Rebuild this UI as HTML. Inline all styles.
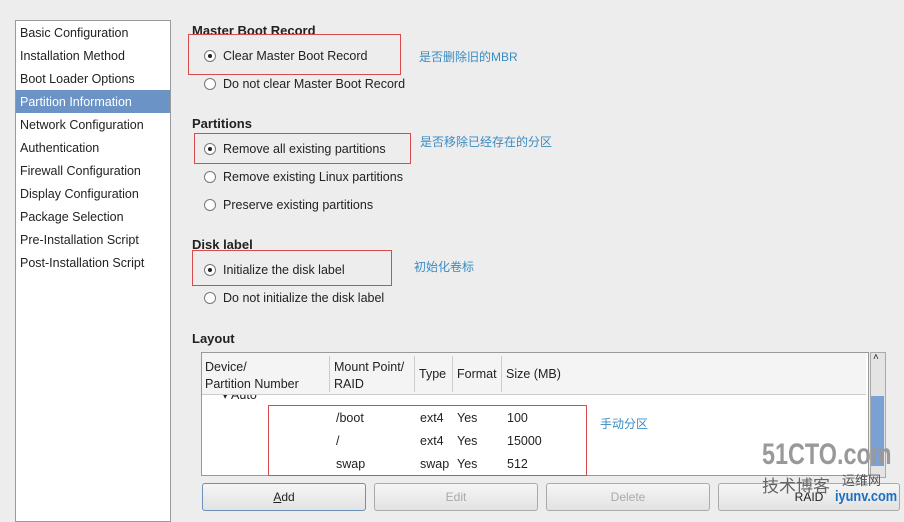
<!DOCTYPE html>
<html><head><style>
body{margin:0;width:904px;height:512px;background:#ededed;font-family:"Liberation Sans","Noto Sans CJK SC",sans-serif;font-size:12.5px;color:#222;position:relative;overflow:hidden}
.a{position:absolute;white-space:nowrap}
#nav{position:absolute;left:15px;top:20px;width:154px;height:500px;background:#fff;border:1px solid #9a9a9a}
#nav div{height:23px;line-height:23px;padding-left:4px;padding-top:1px;box-sizing:border-box}
#nav .sel{background:#6b93c6;color:#fff}
.h{font-weight:bold;font-size:13px}
.r{width:10px;height:10px;border:1px solid #777;border-radius:50%;background:#fff;position:absolute}
.r.on::after{content:"";position:absolute;left:3px;top:3px;width:4px;height:4px;border-radius:50%;background:#222}
.box{position:absolute;border:1px solid #d94a4a}
.cn{color:#3a8cc2;font-size:12px}
.btn{position:absolute;top:483px;height:26px;border:1px solid #aaa;border-radius:3px;background:linear-gradient(#f6f6f6,#e2e2e2);text-align:center;line-height:26px;color:#aaa;font-size:12px}
</style></head><body>
<div id="nav">
<div>Basic Configuration</div><div>Installation Method</div><div>Boot Loader Options</div><div class="sel">Partition Information</div><div>Network Configuration</div><div>Authentication</div><div>Firewall Configuration</div><div>Display Configuration</div><div>Package Selection</div><div>Pre-Installation Script</div><div>Post-Installation Script</div>
</div>
<div class="a h" style="left:192px;top:23px">Master Boot Record</div>
<div class="box" style="left:188px;top:34px;width:211px;height:39px"></div>
<div class="r on" style="left:204px;top:50px"></div><div class="a" style="left:223px;top:49px">Clear Master Boot Record</div>
<div class="r" style="left:204px;top:78px"></div><div class="a" style="left:223px;top:77px">Do not clear Master Boot Record</div>
<div class="a cn" style="left:419px;top:48px">是否删除旧的MBR</div>
<div class="a h" style="left:192px;top:116px">Partitions</div>
<div class="box" style="left:194px;top:133px;width:215px;height:29px"></div>
<div class="r on" style="left:204px;top:143px"></div><div class="a" style="left:223px;top:142px">Remove all existing partitions</div>
<div class="r" style="left:204px;top:171px"></div><div class="a" style="left:223px;top:170px">Remove existing Linux partitions</div>
<div class="r" style="left:204px;top:199px"></div><div class="a" style="left:223px;top:198px">Preserve existing partitions</div>
<div class="a cn" style="left:420px;top:133px">是否移除已经存在的分区</div>
<div class="a h" style="left:192px;top:237px">Disk label</div>
<div class="box" style="left:192px;top:250px;width:198px;height:34px"></div>
<div class="r on" style="left:204px;top:264px"></div><div class="a" style="left:223px;top:263px">Initialize the disk label</div>
<div class="r" style="left:204px;top:292px"></div><div class="a" style="left:223px;top:291px">Do not initialize the disk label</div>
<div class="a cn" style="left:414px;top:258px">初始化卷标</div>
<div class="a h" style="left:192px;top:331px">Layout</div>
<div style="position:absolute;left:201px;top:352px;width:666px;height:122px;background:#fff;border:1px solid #999;overflow:hidden">
<div class="a" style="left:20px;top:34px">▾ Auto</div>
</div>
<div style="position:absolute;left:202px;top:353px;width:664px;height:41px;background:#f4f4f4;border-bottom:1px solid #ccc"></div>
<div class="a" style="left:205px;top:359px;line-height:17px">Device/<br>Partition Number</div>
<div class="a" style="left:334px;top:359px;line-height:17px">Mount Point/<br>RAID</div>
<div class="a" style="left:419px;top:367px">Type</div>
<div class="a" style="left:457px;top:367px">Format</div>
<div class="a" style="left:506px;top:367px">Size (MB)</div>
<div style="position:absolute;left:329px;top:356px;width:1px;height:36px;background:#ccc"></div>
<div style="position:absolute;left:414px;top:356px;width:1px;height:36px;background:#ccc"></div>
<div style="position:absolute;left:452px;top:356px;width:1px;height:36px;background:#ccc"></div>
<div style="position:absolute;left:501px;top:356px;width:1px;height:36px;background:#ccc"></div>
<div class="box" style="left:268px;top:405px;width:317px;height:69px;background:#fff"></div>
<div class="a" style="left:336px;top:411px">/boot</div><div class="a" style="left:420px;top:411px">ext4</div><div class="a" style="left:457px;top:411px">Yes</div><div class="a" style="left:507px;top:411px">100</div>
<div class="a" style="left:336px;top:434px">/</div><div class="a" style="left:420px;top:434px">ext4</div><div class="a" style="left:457px;top:434px">Yes</div><div class="a" style="left:507px;top:434px">15000</div>
<div class="a" style="left:336px;top:457px">swap</div><div class="a" style="left:420px;top:457px">swap</div><div class="a" style="left:457px;top:457px">Yes</div><div class="a" style="left:507px;top:457px">512</div>
<div class="a cn" style="left:600px;top:415px">手动分区</div>
<div style="position:absolute;left:870px;top:352px;width:14px;height:124px;background:#e4e4e4;border:1px solid #aaa"></div>
<div class="a" style="left:873px;top:352px;font-size:10px">˄</div>
<div style="position:absolute;left:871px;top:396px;width:13px;height:70px;background:#7aa0d4"></div>
<div class="btn" style="left:202px;width:162px;color:#222;border-color:#6d8fb8"><u>A</u>dd</div>
<div class="btn" style="left:374px;width:162px">Edit</div>
<div class="btn" style="left:546px;width:162px">Delete</div>
<div class="btn" style="left:718px;width:180px;color:#222">RAID</div>
<div class="a" style="left:762px;top:438px;font-size:30px;font-weight:bold;color:#999;transform:scaleX(0.78);transform-origin:0 0">51CTO.com</div>
<div class="a" style="left:762px;top:472px;font-size:17px;color:#666">技术博客</div>
<div class="a" style="left:842px;top:470px;font-size:13px;color:#555">运维网</div>
<div class="a" style="left:835px;top:488px;font-size:15px;font-weight:bold;color:#1a6fc4;transform:scaleX(0.85);transform-origin:0 0">iyunv.com</div>
</body></html>
